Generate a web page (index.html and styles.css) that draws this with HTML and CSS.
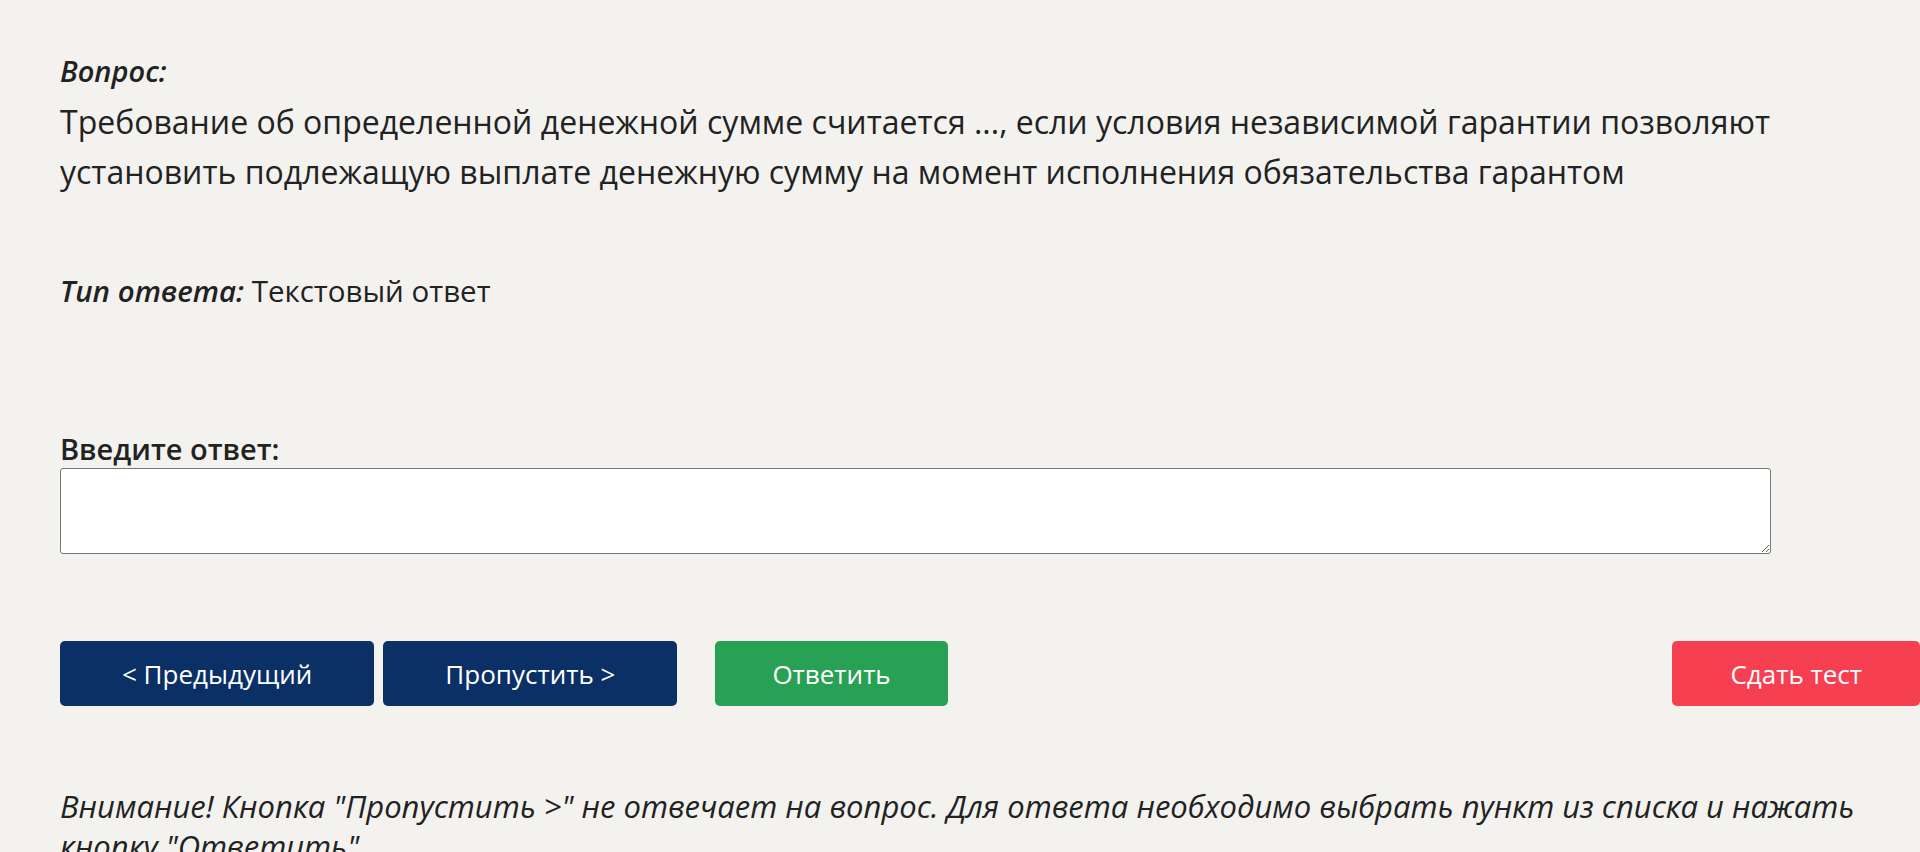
FILE: index.html
```html
<!DOCTYPE html>
<html lang="ru">
<head>
    <meta charset="UTF-8">
    <title>Тестирование</title>
    <link rel="stylesheet" href="styles.css">
</head>
<body>
    <div class="container">
        <!-- Question -->
        <div class="question">
            <div class="caption">Вопрос:</div>
            <div class="question-text">Требование об определенной денежной сумме считается ..., если условия независимой гарантии позволяют установить подлежащую выплате денежную сумму на момент исполнения обязательства гарантом</div>
        </div>
        <!-- Answer type -->
        <div class="answer-type">
            <span class="caption">Тип ответа:</span> Текстовый ответ
        </div>
        <!-- Answer field -->
        <form class="answer-form">
            <label for="answer" class="answer-label">Введите ответ:</label>
            <textarea id="answer" name="answer"></textarea>
            <div class="buttons">
                <button type="button" class="btn btn-nav">&lt; Предыдущий</button>
                <button type="button" class="btn btn-nav">Пропустить &gt;</button>
                <button type="submit" class="btn btn-answer">Ответить</button>
                <button type="button" class="btn btn-finish">Сдать тест</button>
            </div>
        </form>
        <p class="notice">Внимание! Кнопка "Пропустить &gt;" не отвечает на вопрос. Для ответа необходимо выбрать пункт из списка и нажать кнопку "Ответить".</p>
    </div>
</body>
</html>
```

FILE: styles.css
```css
body {
    margin: 0;
    background-color: #f3f2ef;
    color: #222;
    font-family: "Open Sans", "Noto Sans", sans-serif;
}
.container {
    padding: 45px 0 0 60px;
}
.caption {
    font-style: italic;
    font-weight: 600;
}
.question .caption {
    font-size: 29px;
    line-height: 52px;
}
.question-text {
    font-size: 32px;
    line-height: 50px;
    max-width: 1740px;
}
.answer-type {
    margin-top: 74px;
    font-size: 29.5px;
    line-height: 40px;
}
.answer-form {
    margin-top: 119px;
}
.answer-label {
    display: block;
    font-size: 29px;
    font-weight: 600;
    line-height: 38px;
}
textarea {
    display: block;
    box-sizing: border-box;
    width: 1711px;
    height: 86px;
    border: 1px solid #767676;
    border-radius: 3px;
    background: #fff;
}
.buttons {
    display: flex;
    align-items: center;
    gap: 9px;
    margin-top: 87px;
}
.btn {
    height: 65px;
    padding: 0 62px;
    border: none;
    border-radius: 5px;
    color: #fff;
    font-family: inherit;
    font-size: 26px;
    cursor: pointer;
}
.btn-nav {
    background-color: #0b3066;
}
.btn-answer {
    margin-left: 29px;
    padding: 0 57px;
    background-color: #28a155;
}
.btn-finish {
    margin-left: auto;
    padding: 0 58px;
    background-color: #f63f50;
}
.notice {
    margin: 80px 0 0;
    font-size: 31px;
    font-style: italic;
    line-height: 40px;
}
```
